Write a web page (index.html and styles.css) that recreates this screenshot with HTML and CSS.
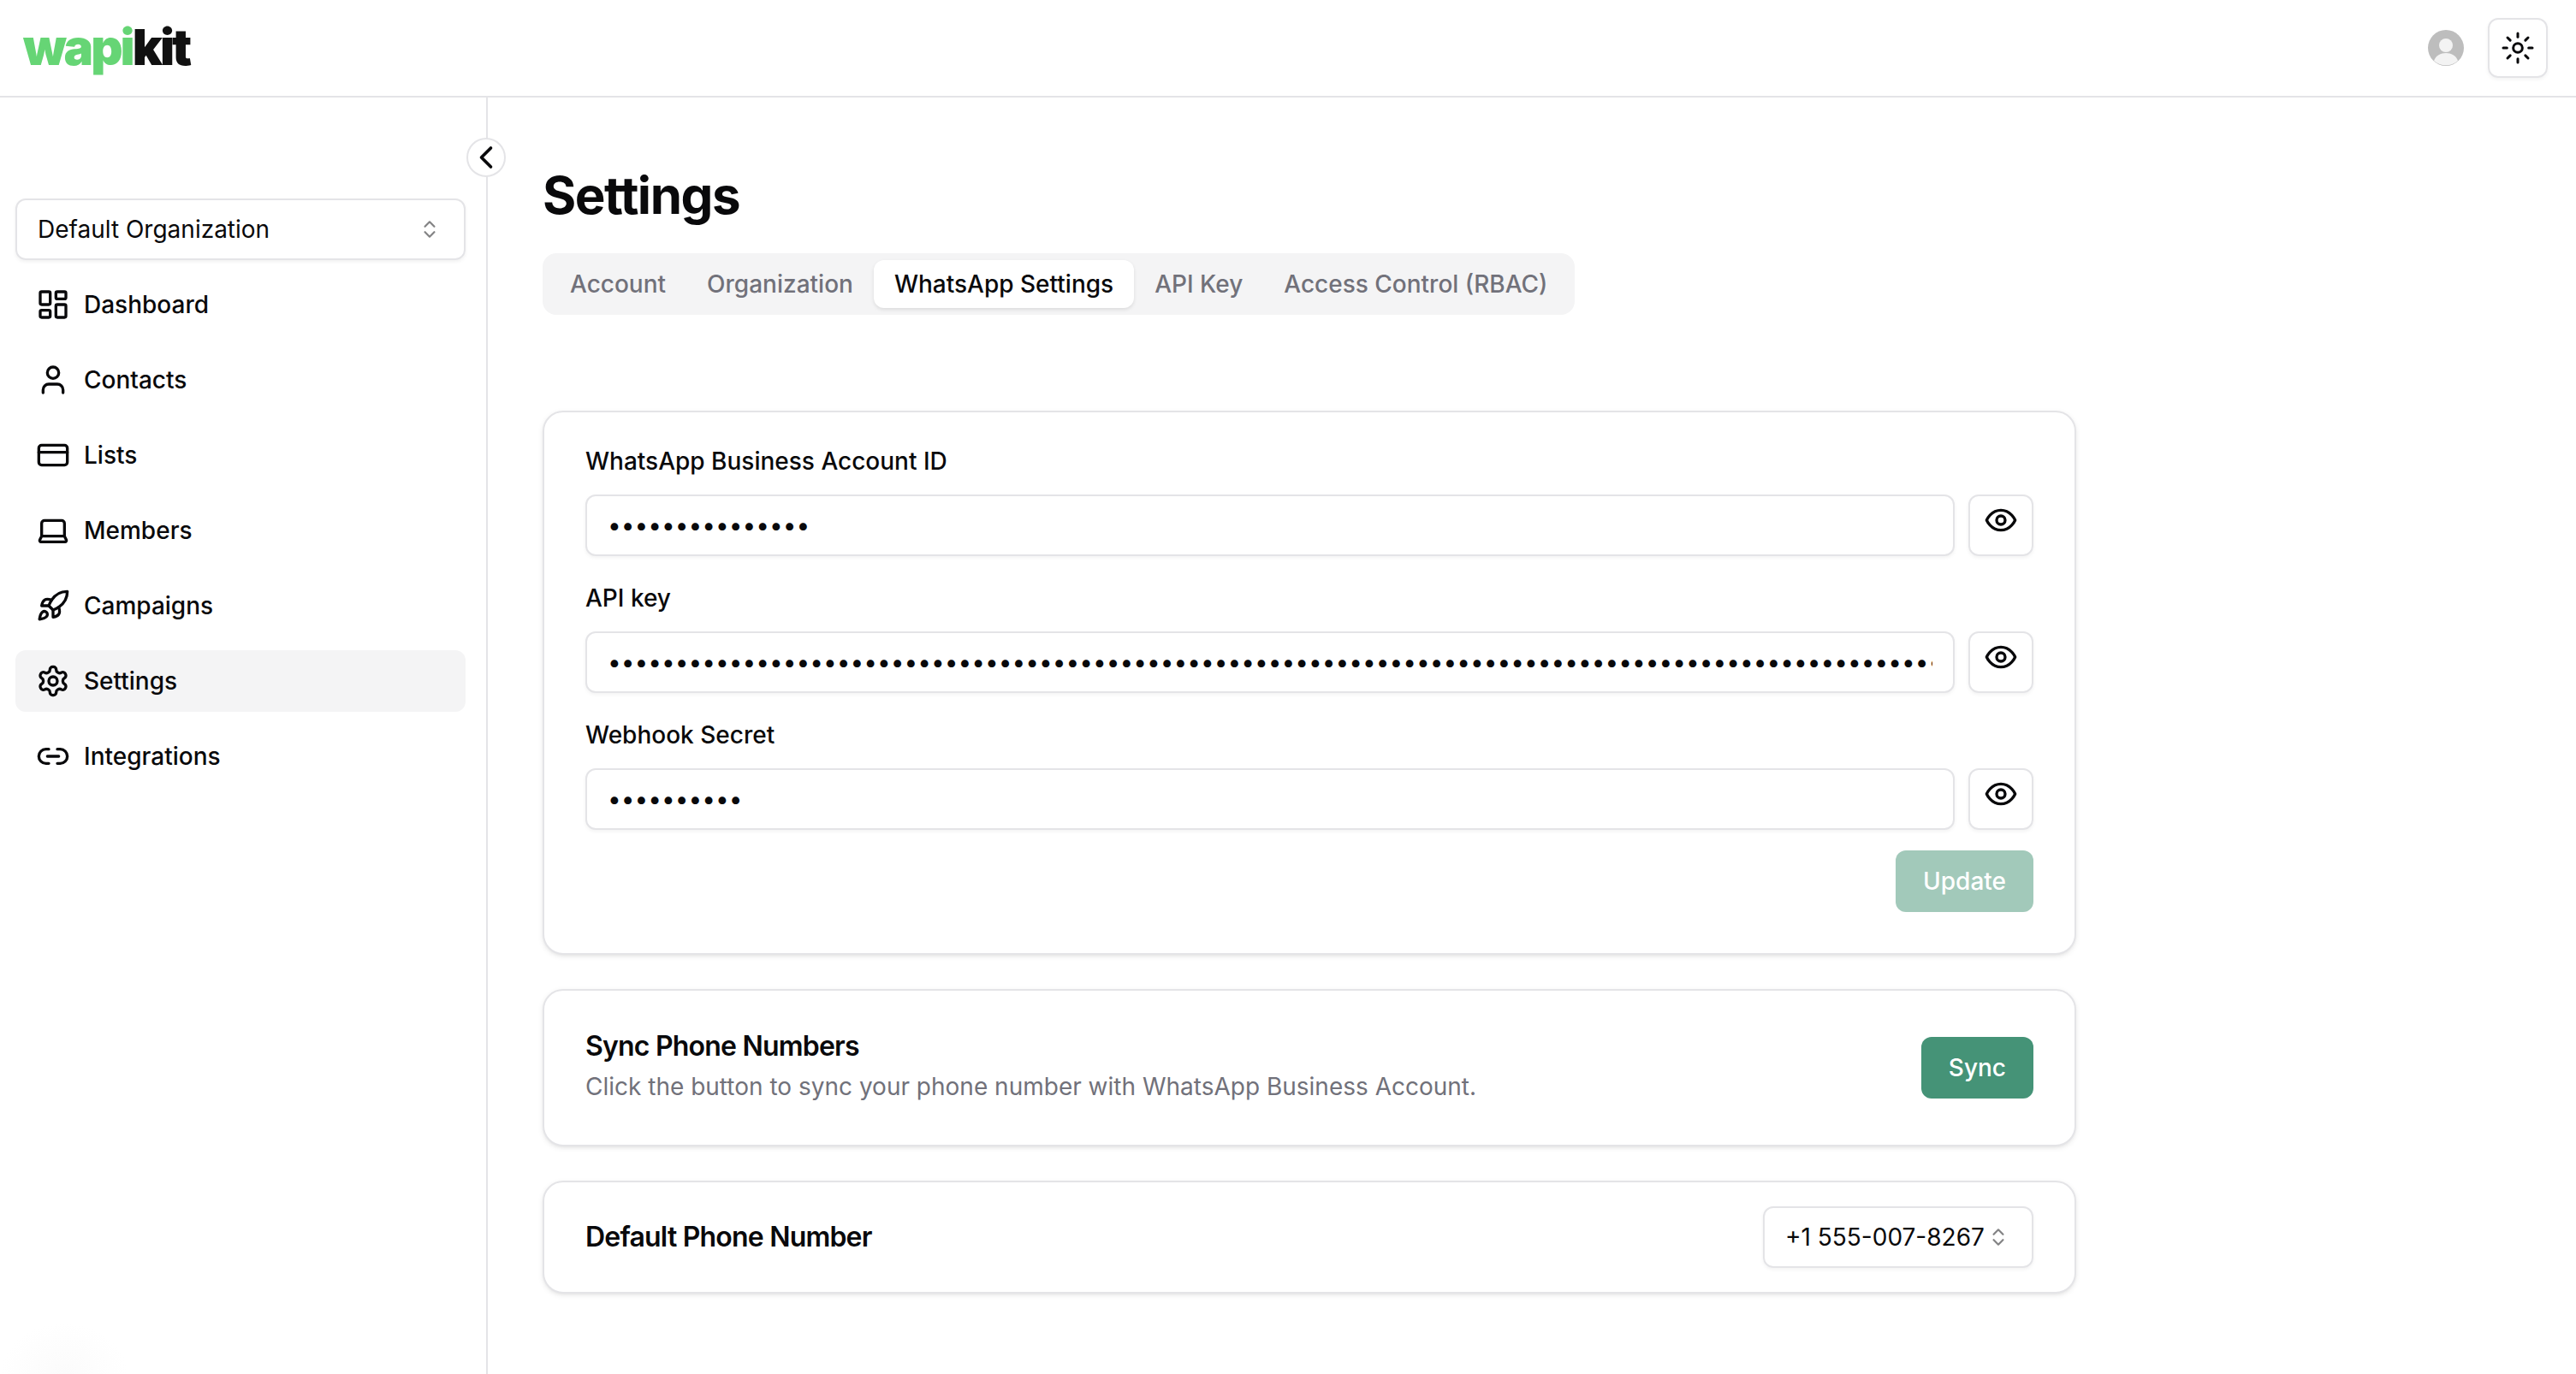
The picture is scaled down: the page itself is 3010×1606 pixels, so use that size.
FILE: index.html
```html
<!DOCTYPE html>
<html lang="en">
<head>
  <meta charset="UTF-8">
  <meta name="viewport" content="width=device-width, initial-scale=1.0">
  <title>Settings - WapiKit</title>
  <link rel="stylesheet" href="styles.css">
</head>
<body>

  <svg class="sprites" width="0" height="0">
    <symbol id="i-eye" viewBox="0 0 24 24">
      <path d="M2 12s3-7 10-7 10 7 10 7-3 7-10 7-10-7-10-7Z"/>
      <circle cx="12" cy="12" r="3"/>
    </symbol>
    <symbol id="i-updown" viewBox="0 0 24 24">
      <path d="m7 15 5 5 5-5"/>
      <path d="m7 9 5-5 5 5"/>
    </symbol>
  </svg>

  <header class="topbar">
    <div class="logo"><span class="logo-green">wapi</span><span class="logo-dark">kit</span></div>
    <div class="topbar-right">
      <svg class="avatar" viewBox="0 0 42 42">
        <circle cx="21" cy="21" r="21" fill="#bdbdbd"/>
        <circle cx="21" cy="18" r="8" fill="#f3f3f3"/>
        <path d="M7 36c2-6 8-9 14-9s12 3 14 9a21 21 0 0 1-28 0z" fill="#f3f3f3"/>
      </svg>
      <button class="theme-btn">
        <svg class="icon sun" viewBox="0 0 24 24">
          <circle cx="12" cy="12" r="3.2"/>
          <path d="M12 1.8v2.6"/><path d="M12 19.6v2.6"/>
          <path d="m4.8 4.8 1.9 1.9"/><path d="m17.3 17.3 1.9 1.9"/>
          <path d="M1.8 12h2.6"/><path d="M19.6 12h2.6"/>
          <path d="m6.7 17.3-1.9 1.9"/><path d="m19.2 4.8-1.9 1.9"/>
        </svg>
      </button>
    </div>
  </header>

  <div class="layout">
    <aside class="sidebar">
      <button class="collapse-btn">
        <svg class="icon chevron" viewBox="0 0 24 24"><path d="m15 18-6-6 6-6"/></svg>
      </button>

      <div class="org-select">
        <span>Default Organization</span>
        <svg class="updown"><use href="#i-updown"/></svg>
      </div>

      <a class="nav-item">
        <svg class="icon" viewBox="0 0 24 24">
          <rect width="7" height="9" x="3" y="3" rx="1"/>
          <rect width="7" height="5" x="14" y="3" rx="1"/>
          <rect width="7" height="9" x="14" y="12" rx="1"/>
          <rect width="7" height="5" x="3" y="16" rx="1"/>
        </svg>
        Dashboard
      </a>
      <a class="nav-item">
        <svg class="icon" viewBox="0 0 24 24">
          <path d="M19 21v-2a4 4 0 0 0-4-4H9a4 4 0 0 0-4 4v2"/>
          <circle cx="12" cy="7" r="4"/>
        </svg>
        Contacts
      </a>
      <a class="nav-item">
        <svg class="icon" viewBox="0 0 24 24">
          <rect width="20" height="14" x="2" y="5" rx="2"/>
          <line x1="2" x2="22" y1="10" y2="10"/>
        </svg>
        Lists
      </a>
      <a class="nav-item">
        <svg class="icon" viewBox="0 0 24 24">
          <path d="M20 16V7a2 2 0 0 0-2-2H6a2 2 0 0 0-2 2v9m16 0H4m16 0 1.28 2.55a1 1 0 0 1-.9 1.45H3.62a1 1 0 0 1-.9-1.45L4 16"/>
        </svg>
        Members
      </a>
      <a class="nav-item">
        <svg class="icon" viewBox="0 0 24 24">
          <path d="M4.5 16.5c-1.5 1.26-2 5-2 5s3.74-.5 5-2c.71-.84.7-2.13-.09-2.91a2.18 2.18 0 0 0-2.91-.09z"/>
          <path d="m12 15-3-3a22 22 0 0 1 2-3.95A12.88 12.88 0 0 1 22 2c0 2.72-.78 7.5-6 11a22.35 22.35 0 0 1-4 2z"/>
          <path d="M9 12H4s.55-3.03 2-4c1.62-1.08 5 0 5 0"/>
          <path d="M12 15v5s3.03-.55 4-2c1.08-1.62 0-5 0-5"/>
        </svg>
        Campaigns
      </a>
      <a class="nav-item active">
        <svg class="icon" viewBox="0 0 24 24">
          <path d="M12.22 2h-.44a2 2 0 0 0-2 2v.18a2 2 0 0 1-1 1.73l-.43.25a2 2 0 0 1-2 0l-.15-.08a2 2 0 0 0-2.73.73l-.22.38a2 2 0 0 0 .73 2.73l.15.1a2 2 0 0 1 1 1.72v.51a2 2 0 0 1-1 1.74l-.15.09a2 2 0 0 0-.73 2.73l.22.38a2 2 0 0 0 2.73.73l.15-.08a2 2 0 0 1 2 0l.43.25a2 2 0 0 1 1 1.73V20a2 2 0 0 0 2 2h.44a2 2 0 0 0 2-2v-.18a2 2 0 0 1 1-1.73l.43-.25a2 2 0 0 1 2 0l.15.08a2 2 0 0 0 2.73-.73l.22-.39a2 2 0 0 0-.73-2.73l-.15-.08a2 2 0 0 1-1-1.74v-.5a2 2 0 0 1 1-1.74l.15-.09a2 2 0 0 0 .73-2.73l-.22-.38a2 2 0 0 0-2.73-.73l-.15.08a2 2 0 0 1-2 0l-.43-.25a2 2 0 0 1-1-1.73V4a2 2 0 0 0-2-2z"/>
          <circle cx="12" cy="12" r="3"/>
        </svg>
        Settings
      </a>
      <a class="nav-item">
        <svg class="icon" viewBox="0 0 24 24">
          <path d="M9 17H7A5 5 0 0 1 7 7h2"/>
          <path d="M15 7h2a5 5 0 1 1 0 10h-2"/>
          <line x1="8" x2="16" y1="12" y2="12"/>
        </svg>
        Integrations
      </a>
    </aside>

    <main class="content">
      <h1>Settings</h1>

      <div class="tabs">
        <button class="tab">Account</button>
        <button class="tab">Organization</button>
        <button class="tab active">WhatsApp Settings</button>
        <button class="tab">API Key</button>
        <button class="tab">Access Control (RBAC)</button>
      </div>

      <section class="card form-card">
        <label class="field-label">WhatsApp Business Account ID</label>
        <div class="field-row">
          <input class="field" type="password" value="123456789012345">
          <button class="eye-btn"><svg class="icon"><use href="#i-eye"/></svg></button>
        </div>

        <label class="field-label">API key</label>
        <div class="field-row">
          <input class="field" type="password" value="EAAGm0PX4ZCpsBOZBZAq7vKxT2ZBnUeYhLdR9mWfJ3sQkC8aPtLvN5oG1iHyXcE6bDuZrM0wTjS4fKqA7nVgP2lYxRtB9eUoI3hWzCmN8dFsJ6kQvG1aLyT5pXrE0uOiH7cMbZwD4gSnK2jAfV9tY3qRlPxU6eBoW8iN1mGzC5hTsJ0dLkFvQ4yAr7XpE">
          <button class="eye-btn"><svg class="icon"><use href="#i-eye"/></svg></button>
        </div>

        <label class="field-label">Webhook Secret</label>
        <div class="field-row">
          <input class="field" type="password" value="abcdefghij">
          <button class="eye-btn"><svg class="icon"><use href="#i-eye"/></svg></button>
        </div>

        <div class="form-actions">
          <button class="btn btn-disabled">Update</button>
        </div>
      </section>

      <section class="card sync-card">
        <div class="sync-text">
          <h3>Sync Phone Numbers</h3>
          <p>Click the button to sync your phone number with WhatsApp Business Account.</p>
        </div>
        <button class="btn">Sync</button>
      </section>

      <section class="card phone-card">
        <h3>Default Phone Number</h3>
        <div class="phone-select">
          <span>+1 555-007-8267</span>
          <svg class="updown"><use href="#i-updown"/></svg>
        </div>
      </section>
    </main>
  </div>

  <div class="corner-glow"></div>

</body>
</html>
```

FILE: styles.css
```css
* {
  box-sizing: border-box;
}
body {
  margin: 0;
  height: 1606px;
  overflow: hidden;
  font-family: Inter, "Liberation Sans", sans-serif;
  font-size: 28px;
  color: #09090b;
  background-color: #fff;
}
button {
  font-family: inherit;
  font-size: inherit;
  color: inherit;
  background: none;
  border: none;
  padding: 0;
}
.sprites {
  position: absolute;
}
.icon {
  width: 40px;
  height: 40px;
  flex: none;
  fill: none;
  stroke: #09090b;
  stroke-width: 2;
  stroke-linecap: round;
  stroke-linejoin: round;
}
.chevron {
  width: 44px;
  height: 44px;
}
.sun {
  stroke-width: 1.8;
}
.updown {
  width: 26px;
  height: 26px;
  flex: none;
  fill: none;
  stroke: #09090b;
  stroke-width: 2;
  stroke-linecap: round;
  stroke-linejoin: round;
  opacity: 0.5;
}

/* top bar */
.topbar {
  height: 114px;
  border-bottom: 2px solid #e4e4e7;
  display: flex;
  align-items: center;
  justify-content: space-between;
  padding: 0 33px 0 27px;
}
.logo {
  font-size: 58px;
  font-weight: 900;
  letter-spacing: -0.052em;
  line-height: 1;
  padding-bottom: 3px;
}
.logo-green {
  color: #66d575;
}
.logo-dark {
  color: #111;
}
.topbar-right {
  display: flex;
  align-items: center;
  gap: 28px;
}
.avatar {
  width: 42px;
  height: 42px;
}
.theme-btn {
  width: 70px;
  height: 70px;
  border: 2px solid #e4e4e7;
  border-radius: 12px;
  box-shadow: 0 2px 4px rgba(0, 0, 0, 0.05);
  display: flex;
  align-items: center;
  justify-content: center;
}

.layout {
  display: flex;
  height: 1492px;
}

/* sidebar */
.sidebar {
  position: relative;
  width: 570px;
  flex: none;
  border-right: 2px solid #e4e4e7;
  padding: 118px 24px 0 18px;
  display: flex;
  flex-direction: column;
  gap: 16px;
}
.collapse-btn {
  position: absolute;
  top: 47px;
  right: -23px;
  width: 46px;
  height: 46px;
  border: 2px solid #e4e4e7;
  border-radius: 50%;
  background: #fff;
  display: flex;
  align-items: center;
  justify-content: center;
}
.org-select {
  height: 72px;
  border: 2px solid #e4e4e7;
  border-radius: 12px;
  box-shadow: 0 2px 4px rgba(0, 0, 0, 0.06);
  display: flex;
  align-items: center;
  justify-content: space-between;
  padding: 0 27px 0 24px;
}
.nav-item {
  height: 72px;
  border-radius: 12px;
  display: flex;
  align-items: center;
  gap: 16px;
  padding-left: 24px;
  font-weight: 500;
}
.nav-item.active {
  background-color: #f4f4f5;
}

/* main column */
.content {
  flex: 1;
  padding: 78px 0 0 64px;
}
h1 {
  margin: 0 0 32px;
  font-size: 60px;
  line-height: 72px;
  font-weight: 700;
  letter-spacing: -0.025em;
}
.tabs {
  display: inline-flex;
  height: 72px;
  padding: 8px;
  background-color: #f4f4f5;
  border-radius: 16px;
}
.tab {
  height: 56px;
  padding: 0 24px;
  border-radius: 12px;
  font-weight: 500;
  color: #71717a;
}
.tab.active {
  background-color: #fff;
  color: #09090b;
  box-shadow: 0 2px 4px rgba(0, 0, 0, 0.1);
}

.card {
  width: 1792px;
  border: 2px solid #e4e4e7;
  border-radius: 24px;
  background-color: #fff;
  box-shadow: 0 2px 6px rgba(0, 0, 0, 0.08), 0 2px 4px -2px rgba(0, 0, 0, 0.08);
  margin-bottom: 40px;
}
.card h3 {
  margin: 0;
  font-size: 32px;
  font-weight: 600;
  letter-spacing: -0.025em;
}
.form-card {
  margin-top: 112px;
  padding: 40px 48px 48px;
}
.field-label {
  display: block;
  height: 32px;
  line-height: 34px;
  font-weight: 500;
  margin-bottom: 24px;
}
.field-row {
  display: flex;
  gap: 16px;
  margin-bottom: 32px;
}
.field {
  flex: 1;
  min-width: 0;
  height: 72px;
  padding: 0 24px;
  border: 2px solid #e4e4e7;
  border-radius: 12px;
  box-shadow: 0 2px 4px rgba(0, 0, 0, 0.05);
  font-family: inherit;
  font-size: 28px;
  color: #09090b;
  outline: none;
}
.eye-btn {
  width: 76px;
  height: 72px;
  flex: none;
  border: 2px solid #e4e4e7;
  border-radius: 12px;
  box-shadow: 0 2px 4px rgba(0, 0, 0, 0.05);
  display: flex;
  justify-content: center;
  padding-top: 8px;
}
.form-actions {
  display: flex;
  justify-content: flex-end;
  margin-top: -8px;
}
.btn {
  height: 72px;
  padding: 0 32px;
  border-radius: 12px;
  background-color: #459377;
  color: #fff;
  font-weight: 500;
}
.btn-disabled {
  background-color: #a2c9ba;
}
.sync-card {
  height: 184px;
  padding: 0 48px;
  display: flex;
  align-items: center;
  justify-content: space-between;
}
.sync-text {
  padding-bottom: 7px;
}
.sync-card p {
  margin: 11px 0 0;
  color: #71717a;
}
.phone-card {
  height: 132px;
  padding: 0 48px;
  display: flex;
  align-items: center;
  justify-content: space-between;
}
.phone-card h3 {
  padding-bottom: 2px;
}
.phone-select {
  width: 316px;
  height: 72px;
  border: 2px solid #e4e4e7;
  border-radius: 12px;
  box-shadow: 0 2px 4px rgba(0, 0, 0, 0.05);
  display: flex;
  align-items: center;
  gap: 3px;
  padding-left: 24px;
  white-space: nowrap;
}

/* faint smudge in the bottom left corner */
.corner-glow {
  position: fixed;
  left: 0;
  bottom: -60px;
  width: 150px;
  height: 120px;
  background: radial-gradient(ellipse at center, #fbfbfb 0%, #fff 70%);
}
```
